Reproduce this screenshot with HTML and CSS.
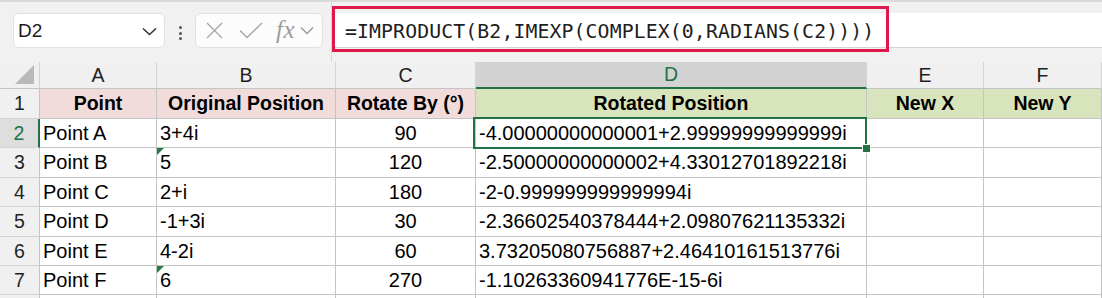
FILE: index.html
```html
<!DOCTYPE html>
<html>
<head>
<meta charset="utf-8">
<link rel="stylesheet" href="styles.css">
</head>
<body>
<div class="toolbar">
  <div class="namebox">
    <span class="name">D2</span>
    <svg class="chev" width="15" height="9" viewBox="0 0 15 9"><path d="M1 1.5 L7.5 7.5 L14 1.5" fill="none" stroke="#333" stroke-width="1.6"/></svg>
  </div>
  <div class="dots"><i></i><i></i><i></i></div>
  <div class="fxbox">
    <svg class="ico-x" width="17" height="17" viewBox="0 0 17 17"><path d="M1 1 L16 16 M16 1 L1 16" stroke="#a8a8a8" stroke-width="1.4" fill="none"/></svg>
    <svg class="ico-check" width="24" height="17" viewBox="0 0 24 17"><path d="M1 8.5 L8 15.5 L23 1" stroke="#a8a8a8" stroke-width="1.4" fill="none"/></svg>
    <span class="fx">fx</span>
    <svg class="chev-s" width="14" height="9" viewBox="0 0 14 9"><path d="M1 1.5 L7 7.5 L13 1.5" fill="none" stroke="#9a9a9a" stroke-width="1.4"/></svg>
  </div>
  <div class="formula">
    <div class="fbar">
      <span class="ftext">=IMPRODUCT(B2,IMEXP(COMPLEX(0,RADIANS(C2))))</span>
      <div class="annot"></div>
    </div>
  </div>
</div>
<div class="sheet">
  <div class="hc corner"><svg width="20" height="20" viewBox="0 0 20 20"><path d="M19 0 L19 19 L0 19 Z" fill="#b9b9b9"/></svg></div>
  <div class="hc">A</div>
  <div class="hc">B</div>
  <div class="hc">C</div>
  <div class="hc sel">D</div>
  <div class="hc">E</div>
  <div class="hc">F</div>

  <div class="rh">1</div>
  <div class="c th pink">Point</div>
  <div class="c th pink">Original Position</div>
  <div class="c th pink">Rotate By (°)</div>
  <div class="c th green">Rotated Position</div>
  <div class="c th green">New X</div>
  <div class="c th green">New Y</div>

  <div class="rh rsel">2</div>
  <div class="c">Point A</div>
  <div class="c">3+4i</div>
  <div class="c num">90</div>
  <div class="c active">-4.00000000000001+2.99999999999999i<div class="selbox"></div></div>
  <div class="c"></div>
  <div class="c"></div>

  <div class="rh">3</div>
  <div class="c">Point B</div>
  <div class="c flag">5</div>
  <div class="c num">120</div>
  <div class="c">-2.50000000000002+4.33012701892218i</div>
  <div class="c"></div>
  <div class="c"></div>

  <div class="rh">4</div>
  <div class="c">Point C</div>
  <div class="c">2+i</div>
  <div class="c num">180</div>
  <div class="c">-2-0.999999999999994i</div>
  <div class="c"></div>
  <div class="c"></div>

  <div class="rh">5</div>
  <div class="c">Point D</div>
  <div class="c">-1+3i</div>
  <div class="c num">30</div>
  <div class="c">-2.36602540378444+2.09807621135332i</div>
  <div class="c"></div>
  <div class="c"></div>

  <div class="rh">6</div>
  <div class="c">Point E</div>
  <div class="c">4-2i</div>
  <div class="c num">60</div>
  <div class="c">3.73205080756887+2.46410161513776i</div>
  <div class="c"></div>
  <div class="c"></div>

  <div class="rh">7</div>
  <div class="c">Point F</div>
  <div class="c flag">6</div>
  <div class="c num">270</div>
  <div class="c">-1.10263360941776E-15-6i</div>
  <div class="c"></div>
  <div class="c"></div>

  <div class="rh"></div>
  <div class="c"></div>
  <div class="c"></div>
  <div class="c"></div>
  <div class="c"></div>
  <div class="c"></div>
  <div class="c"></div>
</div>
</body>
</html>
```

FILE: styles.css
```css
html, body {
  margin: 0;
  padding: 0;
  background: #ffffff;
}
body {
  width: 1102px;
  height: 298px;
  overflow: hidden;
  font-family: "Liberation Sans", Arial, sans-serif;
  color: #000;
}

/* ---------- toolbar ---------- */
.toolbar {
  height: 62px;
  box-sizing: border-box;
  border-top: 2px solid #dadada;
  background: #f1f1f1;
  display: flex;
  align-items: flex-start;
}
.namebox {
  margin-top: 11px;
  margin-left: 13px;
  width: 152px;
  height: 35px;
  box-sizing: border-box;
  background: #ffffff;
  border: 1px solid #e1e1e1;
  border-radius: 6px;
  display: flex;
  align-items: center;
  justify-content: space-between;
  padding: 0 7px 0 4px;
}
.name {
  font-family: "Liberation Sans", Arial, sans-serif;
  font-size: 19px;
  color: #1a1a1a;
}
.chev { margin-top: 1px; }

.dots {
  margin-top: 24px;
  margin-left: 14px;
  width: 3px;
  display: flex;
  flex-direction: column;
  gap: 2.5px;
}
.dots i {
  display: block;
  width: 3px;
  height: 3px;
  border-radius: 50%;
  background: #555;
}

.fxbox {
  margin-top: 11px;
  margin-left: 13px;
  width: 128px;
  height: 35px;
  box-sizing: border-box;
  background: #fcfcfc;
  border: 1px solid #e1e1e1;
  border-radius: 6px;
  display: flex;
  align-items: center;
  padding-left: 10px;
}
.ico-check { margin-left: 16px; }
.fx {
  margin-left: 13px;
  font-family: "Liberation Serif", "DejaVu Serif", serif;
  font-style: italic;
  font-size: 25px;
  color: #9c9c9c;
  letter-spacing: 0.5px;
  line-height: 1;
  margin-top: -2px;
}
.chev-s { margin-left: 5px; }

.formula {
  flex: 1;
  align-self: stretch;
  margin-left: 8px;
  border-left: 1px solid #d8d8d8;
  padding-top: 11px;
}
.fbar {
  position: relative;
  height: 35px;
  box-sizing: border-box;
  background: #ffffff;
  border-bottom: 1px solid #d4d4d4;
  display: flex;
  align-items: center;
  padding-left: 13px;
}
.ftext {
  font-family: "DejaVu Sans Mono", "Liberation Mono", monospace;
  font-size: 19.8px;
  letter-spacing: 0.12px;
  color: #1e1e1e;
  white-space: nowrap;
  margin-top: 3px;
}
.annot {
  position: absolute;
  left: 0;
  top: -7px;
  width: 557px;
  height: 46px;
  box-sizing: border-box;
  border: 3px solid #e0174a;
}

/* ---------- sheet ---------- */
.sheet {
  display: grid;
  grid-template-columns: 40px 117px 179px 140px 391px 117px 1fr;
  grid-template-rows: 27px 30px 29px 30px 29px 30px 29px 29px 10px;
  font-size: 20px;
}
.hc, .rh {
  background: #f0f0f0;
  box-sizing: border-box;
  border-right: 1px solid #d3d3d3;
  border-bottom: 1px solid #c4c4c4;
  display: flex;
  align-items: center;
  justify-content: center;
  color: #1f1f1f;
  font-size: 19.5px;
}
.rh {
  border-right: 1px solid #c4c4c4;
  border-bottom: 1px solid #d3d3d3;
}
.corner {
  justify-content: flex-end;
  align-items: flex-end;
  padding: 0 4px 3px 0;
}
.corner svg { display: block; }
.hc.sel {
  background: #d3d3d3;
  color: #217346;
  border-bottom: 2px solid #217346;
}
.rh.rsel {
  background: #dedede;
  color: #217346;
  border-right: 2px solid #217346;
}

.c {
  position: relative;
  box-sizing: border-box;
  border-right: 1px solid #c4c4c4;
  border-bottom: 1px solid #c4c4c4;
  display: flex;
  align-items: center;
  padding: 0 3px 0 3px;
  white-space: nowrap;
}
.c.num { justify-content: center; }
.c.th {
  justify-content: center;
  font-weight: bold;
  font-size: 19.5px;
}
.c.pink { background: #f2dcdb; }
.c.green { background: #d8e4bc; }

.c.flag::before {
  content: "";
  position: absolute;
  left: 0;
  top: 0;
  border-top: 7px solid #267a45;
  border-right: 7px solid transparent;
}

.c.active { z-index: 2; }
.selbox {
  position: absolute;
  left: -3px;
  top: -2px;
  right: -1px;
  bottom: -2px;
  border: 2px solid #217346;
  pointer-events: none;
}
.selbox::after {
  content: "";
  position: absolute;
  right: -6px;
  bottom: -6px;
  width: 7px;
  height: 7px;
  background: #217346;
  border: 1px solid #ffffff;
}
```
